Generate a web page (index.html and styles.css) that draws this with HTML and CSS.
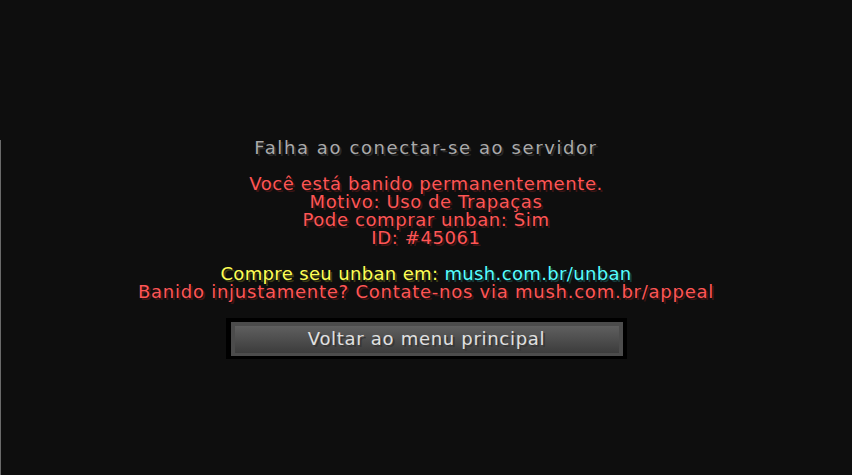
FILE: index.html
```html
<!DOCTYPE html>
<html lang="pt-BR">
<head>
<meta charset="utf-8">
<title>Falha ao conectar-se ao servidor</title>
<link rel="stylesheet" href="styles.css">
</head>
<body>
<div class="screen">
  <div class="edge"></div>
  <div class="message">
    <div class="line gray title">Falha ao conectar-se ao servidor</div>
    <div class="line blank"></div>
    <div class="line red">Você está banido permanentemente.</div>
    <div class="line red">Motivo: Uso de Trapaças</div>
    <div class="line red">Pode comprar unban: Sim</div>
    <div class="line red">ID: #45061</div>
    <div class="line blank"></div>
    <div class="line tight"><span class="yellow">Compre seu unban em: </span><span class="aqua">mush.com.br/unban</span></div>
    <div class="line red wide">Banido injustamente? Contate-nos via mush.com.br/appeal</div>
  </div>
  <div class="button">
    <div class="button-face">
      <span class="button-label">Voltar ao menu principal</span>
    </div>
  </div>
</div>
</body>
</html>
```
FILE: styles.css
```css
html, body {
  margin: 0;
  padding: 0;
  background: #0e0e0e;
}

.screen {
  position: relative;
  width: 852px;
  height: 475px;
  box-sizing: border-box;
  padding-top: 139px;
  display: flex;
  flex-direction: column;
  align-items: center;
  font-family: "DejaVu Sans", sans-serif;
  font-size: 18px;
  letter-spacing: 0.6px;
  overflow: hidden;
}

.edge {
  position: absolute;
  left: 0;
  top: 140px;
  bottom: 0;
  width: 1px;
  background: #6a6a6a;
}

.message {
  display: flex;
  flex-direction: column;
  align-items: center;
  text-align: center;
}

.line {
  height: 18px;
  line-height: 18px;
  white-space: nowrap;
}

.title {
  letter-spacing: 1.6px;
}

.wide {
  letter-spacing: 0.75px;
}

.tight {
  letter-spacing: 0.35px;
}

.gray {
  color: #aaaaaa;
  text-shadow: 2px 2px 0 #2a2a2a;
}

.red {
  color: #ff5555;
  text-shadow: 2px 2px 0 #3f1515;
}

.yellow {
  color: #ffff55;
  text-shadow: 2px 2px 0 #3f3f15;
}

.aqua {
  color: #55ffff;
  text-shadow: 2px 2px 0 #153f3f;
}

.button {
  margin-top: 17px;
  width: 401px;
  height: 41px;
  box-sizing: border-box;
  padding: 4px 4px 3px 5px;
  background: #000000;
}

.button-face {
  height: 100%;
  box-sizing: border-box;
  border-style: solid;
  border-color: #4c4c4c;
  border-width: 4px 4px 3px 4px;
  background: linear-gradient(#5f5f5f, #3c3c3c);
  display: flex;
  justify-content: center;
  align-items: center;
}

.button-label {
  line-height: 18px;
  letter-spacing: 0.7px;
  color: #e0e0e0;
  text-shadow: 2px 2px 0 #383838;
  margin-top: -2px;
}
```
